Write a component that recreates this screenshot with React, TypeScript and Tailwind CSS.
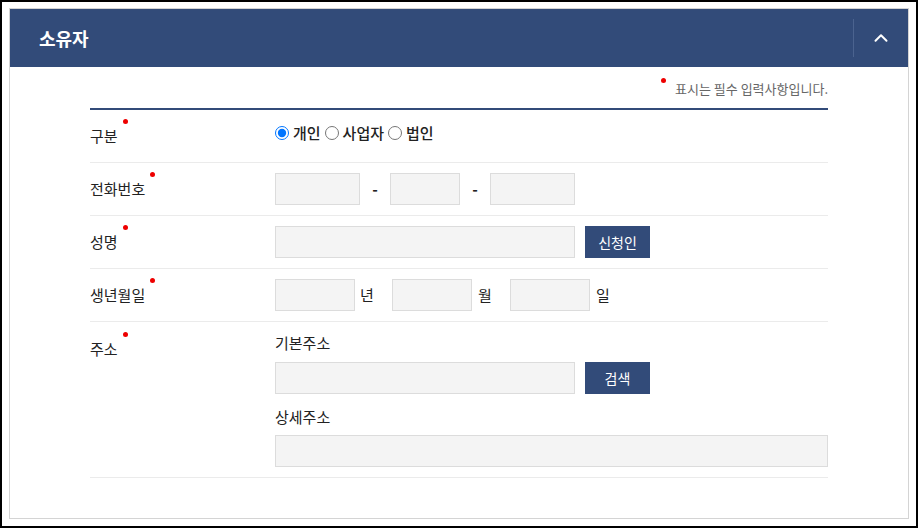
import { ChevronUp } from 'lucide-react';

const font = { fontFamily: '"Noto Sans CJK KR", "Noto Sans", sans-serif' };

function Label({ text, top = false }: { text: string; top?: boolean }) {
  return (
    <div className={`w-[185px] shrink-0 text-[15px] text-[#222] ${top ? 'pt-[16px]' : ''}`}>
      <span className="relative">
        {text}
        <span className="absolute -right-[10px] -top-[6px] h-[5px] w-[5px] rounded-full bg-[#ee0000]" />
      </span>
    </div>
  );
}

function Field({ className }: { className: string }) {
  return <input type="text" className={`h-[32px] border border-[#dcdcdc] bg-[#f4f4f4] outline-none ${className}`} />;
}

function NavyButton({ children }: { children: string }) {
  return (
    <button className="ml-[10px] h-[32px] w-[65px] bg-[#324b79] text-[14px] text-white">{children}</button>
  );
}

function Radio({ label, checked = false, first = false }: { label: string; checked?: boolean; first?: boolean }) {
  return (
    <label className={`flex items-center gap-[4px] ${first ? '' : 'ml-[4px]'}`}>
      <input type="radio" name="kind" defaultChecked={checked} className="m-0 h-[14px] w-[14px]" />
      {label}
    </label>
  );
}

export default function App() {
  return (
    <div style={font} className="h-[528px] w-[918px] border-2 border-black bg-white pl-[7px] pr-[7px] pt-[6px]">
      <div className="h-[511px] border border-[#d4d4d4]">
        <div className="flex h-[58px] items-center bg-[#324b79]">
          <h2 className="flex-1 pl-[29px] text-[18px] font-bold text-white">소유자</h2>
          <div className="h-[38px] w-px bg-[#4b638f]" />
          <div className="flex w-[54px] items-center justify-center">
            <ChevronUp className="h-[22px] w-[22px] text-white" strokeWidth={2.2} />
          </div>
        </div>

        <div className="px-[80px]">
          <p className="flex justify-end pt-[12px] text-[13px] leading-[20px] text-[#666]">
            <span className="relative pl-[14px]">
              <span className="absolute left-0 top-[-1px] h-[5px] w-[5px] rounded-full bg-[#ee0000]" />
              표시는 필수 입력사항입니다.
            </span>
          </p>

          <div className="mt-[9px] border-t-2 border-[#324b79]">
            <div className="flex h-[53px] items-center border-b border-[#ebebeb]">
              <Label text="구분" />
              <div className="-mt-[6px] flex items-center text-[15px] font-medium text-[#222]">
                <Radio label="개인" checked first />
                <Radio label="사업자" />
                <Radio label="법인" />
              </div>
            </div>

            <div className="flex h-[53px] items-center border-b border-[#ebebeb]">
              <Label text="전화번호" />
              <div className="flex items-center">
                <Field className="w-[85px]" />
                <span className="w-[30px] text-center text-[15px] font-bold text-[#222]">-</span>
                <Field className="w-[70px]" />
                <span className="w-[30px] text-center text-[15px] font-bold text-[#222]">-</span>
                <Field className="w-[85px]" />
              </div>
            </div>

            <div className="flex h-[53px] items-center border-b border-[#ebebeb]">
              <Label text="성명" />
              <div className="flex items-center">
                <Field className="w-[300px]" />
                <NavyButton>신청인</NavyButton>
              </div>
            </div>

            <div className="flex h-[53px] items-center border-b border-[#ebebeb]">
              <Label text="생년월일" />
              <div className="flex items-center text-[15px] text-[#222]">
                <Field className="w-[80px]" />
                <span className="w-[37px] pl-[5px]">년</span>
                <Field className="w-[80px]" />
                <span className="w-[38px] pl-[6px]">월</span>
                <Field className="w-[80px]" />
                <span className="pl-[6px]">일</span>
              </div>
            </div>

            <div className="flex border-b border-[#ebebeb] pb-[10px]">
              <Label text="주소" top />
              <div className="flex flex-1 flex-col pt-[11px] text-[15px] text-[#222]">
                <span className="leading-[20px]">기본주소</span>
                <div className="mt-[9px] flex items-center">
                  <Field className="w-[300px]" />
                  <NavyButton>검색</NavyButton>
                </div>
                <span className="mt-[13px] leading-[20px]">상세주소</span>
                <Field className="mt-[8px] w-full" />
              </div>
            </div>
          </div>
        </div>
      </div>
    </div>
  );
}
